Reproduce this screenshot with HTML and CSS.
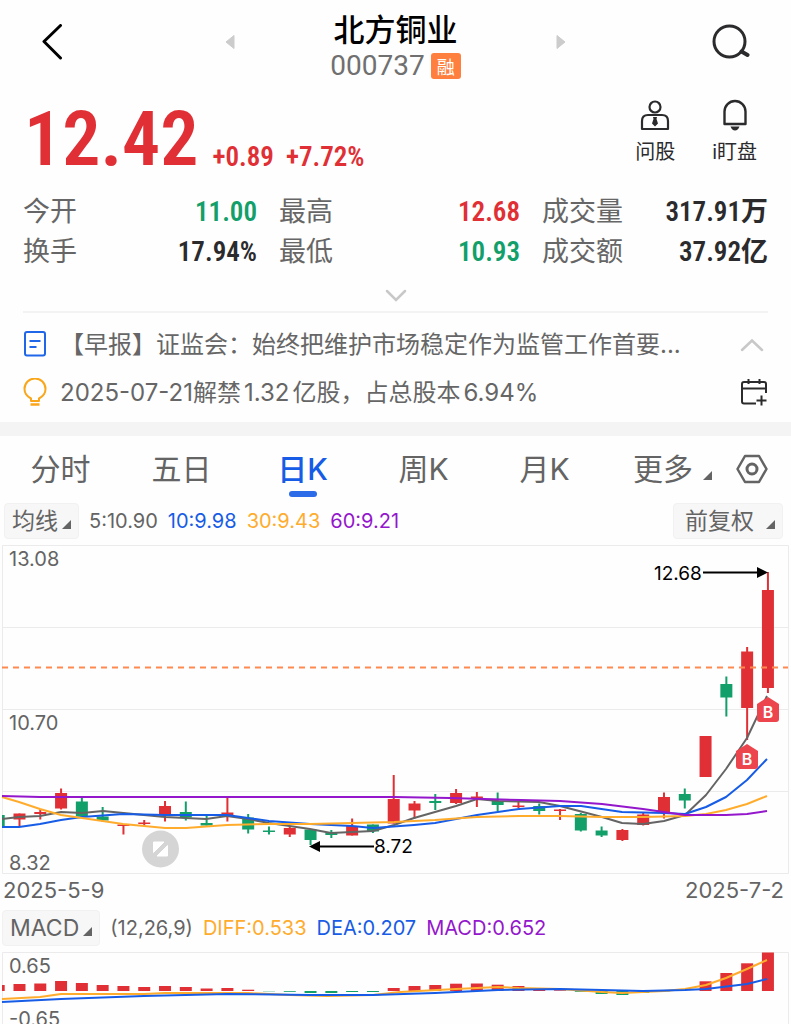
FILE: index.html
```html
<!DOCTYPE html>
<html lang="zh-CN">
<head>
  <meta charset="UTF-8" />
  <meta name="viewport" content="width=device-width, initial-scale=1.0"/>
  <title>北方铜业 000737</title>

  <link rel="stylesheet" href="styles.css">
</head>
<body>
  <header class="top-bar">
    <div class="side">
      <button type="button" aria-label="返回">
        <svg width="22" height="36" viewBox="0 0 22 36"><path d="M19.500 1.500L3 17.500L19.500 34" fill="none" stroke="#000" stroke-width="3" stroke-linecap="round" stroke-linejoin="round"/></svg>
      </button>
      <button type="button" aria-label="上一只">
        <svg width="10" height="16" viewBox="0 0 10 16"><path d="M9 1.500V14.500L1 8Z" fill="#ccc" stroke="#ccc" stroke-linejoin="round"/></svg>
      </button>
    </div>
    <div class="title">
      <h1>北方铜业</h1>
      <div class="code"><span>000737</span><span class="tag">融</span></div>
    </div>
    <div class="side">
      <button type="button" aria-label="下一只">
        <svg width="10" height="16" viewBox="0 0 10 16"><path d="M1 1.500V14.500L9 8Z" fill="#ccc" stroke="#ccc" stroke-linejoin="round"/></svg>
      </button>
      <button type="button" aria-label="搜索">
        <svg width="38" height="36" viewBox="0 0 38 36"><g fill="none" stroke="#2b2b2d" stroke-width="3"><circle cx="17.500" cy="17.500" r="15.500"/><path d="M29.500 27.500L35.500 31" stroke-width="4" stroke-linecap="round"/></g></svg>
      </button>
    </div>
  </header>

  <section class="quote">
    <div class="price">12.42</div>
    <div class="change"><span>+0.89</span><span>+7.72%</span></div>
    <div class="actions">
      <button type="button">
        <svg width="30" height="32" viewBox="0 0 30 32"><g fill="none" stroke="#2b2b2d" stroke-width="2.200"><circle cx="15" cy="8" r="5.500"/><path d="M2 30V22Q2 16 8 16H22Q28 16 28 22V30Z" stroke-linejoin="round"/></g><path d="M13 18H17L16.500 20L18 24.500L15 27.500L12 24.500L13.500 20Z" fill="#2b2b2d"/></svg>
        <span>问股</span>
      </button>
      <button type="button">
        <svg width="30" height="32" viewBox="0 0 30 32"><path d="M4.500 25V12.500A10.500 10.500 0 0 1 25.500 12.500V25Z" fill="none" stroke="#2b2b2d" stroke-width="2.400" stroke-linejoin="round"/><path d="M10.500 27.500H19.500Q18 31.500 15 31.500T10.500 27.500Z" fill="#2b2b2d"/></svg>
        <span>i盯盘</span>
      </button>
    </div>
  </section>

  <dl class="stats">
    <div><dt>今开</dt><dd class="down">11.00</dd></div>
    <div><dt>最高</dt><dd class="up">12.68</dd></div>
    <div><dt>成交量</dt><dd>317.91万</dd></div>
    <div><dt>换手</dt><dd>17.94%</dd></div>
    <div><dt>最低</dt><dd class="down">10.93</dd></div>
    <div><dt>成交额</dt><dd>37.92亿</dd></div>
  </dl>
  <button type="button" class="expand" aria-label="展开">
    <svg width="24" height="14" viewBox="0 0 24 14"><path d="M3 2L12 11L21 2" fill="none" stroke="#c8c8c8" stroke-width="2.500" stroke-linecap="round"/></svg>
  </button>

  <section class="news">
    <div class="news-row">
      <svg width="24" height="28" viewBox="0 0 24 28"><g fill="none" stroke="#1f66e8" stroke-width="2"><rect x="2" y="2" width="20" height="23.500" rx="2"/><path d="M6.500 11H17.500M6.500 17H13.500"/></g></svg>
      <a href="#">【早报】证监会：始终把维护市场稳定作为监管工作首要...</a>
      <button type="button" aria-label="收起">
        <svg width="30" height="28" viewBox="0 0 30 28"><path d="M4 20L14 10.500L24 20" fill="none" stroke="#c8c8c8" stroke-width="2.500" stroke-linecap="round"/></svg>
      </button>
    </div>
    <div class="news-row">
      <svg width="24" height="28" viewBox="0 0 24 28"><g fill="none" stroke="#faa61a" stroke-width="2"><path d="M8 23V20.500Q1.500 17 1.500 11A10.500 10.500 0 0 1 22.500 11Q22.500 17 16 20.500V23Z" stroke-linejoin="round"/><path d="M7.500 26.500H16.500" stroke-width="2.500"/></g></svg>
      <a href="#">2025-07-21解禁<span class="num">1.32</span>亿股，占总股本<span class="num">6.94%</span></a>
      <button type="button" aria-label="添加日历">
        <svg width="30" height="28" viewBox="0 0 30 28"><path d="M18 25.500H6Q4 25.500 4 23.500V6Q4 4 6 4H26Q28 4 28 6V15M4 10.500H28M10.500 1V6M21.500 1V6M23.500 17.500V27.500M18.500 22.500H28.500" fill="none" stroke="#2b2b2d" stroke-width="2"/></svg>
      </button>
    </div>
  </section>

  <nav class="tabs">
    <a href="#">分时</a>
    <a href="#">五日</a>
    <a href="#" class="active">日K</a>
    <a href="#">周K</a>
    <a href="#">月K</a>
    <div class="more">
      <button type="button" class="corner">更多</button>
      <button type="button" aria-label="设置">
        <svg width="32" height="30" viewBox="0 0 32 30"><g fill="none" stroke="#646464" stroke-width="2.500"><path d="M9 2H23L30.500 15L23 28H9L1.500 15Z" stroke-linejoin="round"/><circle cx="16" cy="15" r="5" stroke-width="3"/></g></svg>
      </button>
    </div>
  </nav>

  <div class="legend">
    <button type="button" class="chip corner">均线</button>
    <span>5:10.90</span>
    <span class="blue">10:9.98</span>
    <span class="orange">30:9.43</span>
    <span class="purple">60:9.21</span>
    <button type="button" class="chip corner right">前复权</button>
  </div>
  <svg id="kline" class="chart" viewBox="0 544 791 330" role="img" aria-label="日K线">
    <path class="grid" d="M2.500 545.500H788.500V873.500H2.500ZM2 627.500H788M2 709.500H788M2 791.500H788"/>
    <g id="candles"></g>
    <g id="averages"></g>
    <path class="last" d="M2 667.500H788"/>
    <g class="axis">
      <text x="9" y="566">13.08</text>
      <text x="9" y="730">10.70</text>
      <text x="9" y="870">8.32</text>
    </g>
    <g class="mark">
      <text x="654" y="580">12.68</text>
      <path d="M703 572.500H758" />
      <path d="M757 567L768 572.500L757 578Z"/>
      <text x="374" y="853">8.72</text>
      <path d="M374 846.500H318"/>
      <path d="M320 841L309 846.500L320 852Z"/>
    </g>
    <g class="buy">
      <path d="M747 744L758 751V766Q758 769 755 769H739Q736 769 736 766V751Z"/>
      <text x="747" y="765">B</text>
      <path d="M768 697L779 704V719Q779 722 776 722H760Q757 722 757 719V704Z"/>
      <text x="768" y="718">B</text>
    </g>
    <circle cx="160.500" cy="849" r="18.500" fill="#d5d5d5"/>
    <path d="M153.500 842H164L153.500 852.500ZM167.500 845.500V856H157Z" fill="#fff" stroke="#fff" stroke-linejoin="round"/>
  </svg>
  <div class="dates"><span>2025-5-9</span><span>2025-7-2</span></div>

  <div class="legend macd-legend">
    <button type="button" class="chip corner">MACD</button>
    <span>(12,26,9)</span>
    <span class="orange">DIFF:0.533</span>
    <span class="blue">DEA:0.207</span>
    <span class="purple">MACD:0.652</span>
  </div>
  <svg id="macd" class="chart" viewBox="0 952 791 72" role="img" aria-label="MACD">
    <path class="grid" d="M2.500 1030V952.500H788.500V1030"/>
    <g id="bars"></g>
    <g id="signals"></g>
    <g class="axis">
      <text x="9" y="973">0.65</text>
      <text x="9" y="1026">-0.65</text>
    </g>
  </svg>

  <script src="chart.js"></script>
</body>
</html>
```
FILE: styles.css
```css
* {
  box-sizing: border-box;
}

body {
  margin: 0;
  background: #fefefe;
  color: #2b2b2d;
  font-family: Inter, 'Noto Sans CJK SC', sans-serif;
}

button {
  margin: 0;
  padding: 0;
  border: 0;
  background: none;
  color: inherit;
  font: inherit;
  cursor: pointer;
}

a {
  color: inherit;
  text-decoration: none;
}

svg {
  display: block;
}

.top-bar {
  display: grid;
  grid-template-columns: 1fr auto 1fr;
  align-items: center;
  gap: 95px;
  padding: 0 41px;
  height: 84px;
}

.side {
  display: flex;
  justify-content: space-between;
  align-items: center;
}

.title {
  padding-top: 10px;
  text-align: center;
}

h1 {
  margin: 0;
  color: #000;
  font-size: 31px;
  font-weight: 500;
  line-height: 38px;
}

.code {
  display: flex;
  align-items: center;
  justify-content: center;
  gap: 6px;
  color: #707070;
  font-family: Roboto, sans-serif;
  font-size: 28px;
  line-height: 34px;
}

.tag {
  padding: 0 6px;
  border-radius: 3px;
  background: #ff7f3e;
  color: #fff;
  font-family: 'Noto Sans CJK SC', sans-serif;
  font-size: 18px;
  font-weight: 400;
  line-height: 26px;
}

.quote {
  display: flex;
  align-items: flex-end;
  padding: 0 24px;
  height: 97px;
  color: #e03035;
  font-family: 'Roboto Condensed', Roboto, sans-serif;
  font-weight: 600;
}

.price {
  font-size: 76px;
  line-height: 84px;
}

.change {
  display: flex;
  gap: 12px;
  margin-left: 14px;
  font-size: 27px;
  line-height: 48px;
}

.actions {
  display: flex;
  gap: 37px;
  margin: 0 10px 15px auto;
  color: #2b2b2d;
  font-family: Inter, 'Noto Sans CJK SC', sans-serif;
  font-size: 20px;
  font-weight: 400;
  line-height: 28px;
}

.actions button {
  display: flex;
  flex-direction: column;
  align-items: center;
  gap: 7px;
}

.stats {
  display: grid;
  grid-template-columns: 234fr 241fr 226fr;
  column-gap: 22px;
  margin: 11px 0 0;
  padding: 0 23px;
  line-height: 40px;
}

.stats div {
  display: flex;
  justify-content: space-between;
}

dt {
  color: #666;
  font-size: 27px;
}

dd {
  margin: 0;
  font-family: 'Roboto Condensed', Roboto, 'Noto Sans CJK SC', sans-serif;
  font-size: 27px;
  font-weight: 600;
}

.up {
  color: #e03035;
}

.down {
  color: #129f6a;
}

.expand {
  display: block;
  margin: 17px auto 0;
}

.news {
  margin: 8px 23px 0;
  padding-top: 7px;
  border-top: 2px solid #f3f3f3;
}

.news-row {
  display: flex;
  align-items: center;
  gap: 13px;
  height: 48px;
  color: #666;
  font-size: 24px;
}

.news-row svg {
  flex: none;
}

.news-row a {
  flex: 1;
  padding-bottom: 4px;
  overflow: hidden;
  text-overflow: ellipsis;
  white-space: nowrap;
}

.num {
  margin: 0 3px;
}

.news-row button {
  margin-left: 16px;
}

.tabs {
  display: grid;
  grid-template-columns: repeat(5, 121fr) 186fr;
  margin-top: 6px;
  border-top: 14px solid #f4f4f4;
  color: #646464;
  font-size: 30px;
  line-height: 66px;
}

.tabs > a {
  position: relative;
  text-align: center;
}

.tabs .active {
  color: #175ce6;
  font-weight: 500;
}

.active::after {
  content: '';
  position: absolute;
  left: 50%;
  bottom: 5px;
  width: 28px;
  height: 6px;
  margin-left: -14px;
  border-radius: 3px;
  background: #2c6ce8;
}

.more {
  display: flex;
  align-items: center;
  justify-content: space-between;
  padding: 0 23px 0 28px;
}

.corner {
  display: flex;
  align-items: baseline;
  gap: 10px;
}

.corner::after {
  content: '';
  border: solid transparent;
  border-width: 0 0 9px 9px;
  border-bottom-color: #646464;
}

.legend {
  display: flex;
  align-items: center;
  gap: 10px;
  margin-top: 1px;
  padding: 0 8px 0 4px;
  height: 36px;
  color: #646464;
  font-size: 20px;
}

.chip {
  gap: 4px;
  padding: 0 7px;
  border: 1px solid #f1f1f1;
  border-radius: 4px;
  background: #f7f7f7;
  font-size: 23px;
  line-height: 34px;
}

.chip.right {
  gap: 12px;
  margin-left: auto;
  padding-left: 11px;
}

.blue {
  color: #175ce6;
}

.orange {
  color: #ffac2d;
}

.purple {
  color: #9417cc;
}

.chart {
  width: 100%;
  height: auto;
}

#kline {
  margin-top: 5px;
}

.grid {
  fill: none;
  stroke: #ebebeb;
}

.last {
  stroke: #ff8a50;
  stroke-width: 2;
  stroke-dasharray: 6 5;
}

.red-fill {
  fill: #e03035;
}

.green-fill {
  fill: #129f6a;
}

.line {
  fill: none;
  stroke-width: 2;
  stroke-linejoin: round;
}

.axis {
  fill: #646464;
  font-size: 20px;
}

.mark {
  fill: #000;
  font-size: 19px;
}

.mark path {
  stroke: #000;
  stroke-width: 2;
}

.mark path[d$='Z'] {
  stroke: none;
}

.buy path {
  fill: #ec454d;
}

.buy text {
  fill: #fff;
  font-size: 16px;
  font-weight: 600;
  text-anchor: middle;
}

.dates {
  display: flex;
  justify-content: space-between;
  padding: 0 7px 0 3px;
  color: #646464;
  font-size: 22px;
  line-height: 32px;
}

.macd-legend {
  margin: 4px 0 6px;
  padding-left: 2px;
}
```
FILE: chart.js
```js
const SVG_NS = "http://www.w3.org/2000/svg";
const STEP = 20.79;
const FIRST_X = -1.3;
const BODY = 12;
const LEFT = 2;

// [up, high, open/close top, open/close bottom, low]
const candles = [
  [0, 815, 815, 827, 827], [1, 813.5, 813.5, 819.5, 826], [1, 809, 812, 814, 819.5],
  [1, 788.5, 793, 808.5, 809.5], [0, 797.5, 801.5, 816.5, 816.5], [0, 807, 816.5, 820.5, 822],
  [1, 824, 824.5, 826, 834.5], [1, 820, 822.5, 824, 826], [1, 801, 806, 815, 821.5],
  [0, 801.5, 812, 817.5, 820.5], [0, 814.5, 823, 825.5, 825.5], [1, 797.5, 812.5, 816.5, 821.5],
  [0, 814, 817.5, 829.5, 833.5], [0, 826.5, 830.5, 832, 834.5], [1, 826, 828, 834.5, 837],
  [0, 829, 829.5, 840, 845], [0, 830, 833, 835, 838], [1, 818.5, 826, 835.5, 835.5],
  [0, 824.5, 824.5, 831.5, 833], [1, 775, 799, 823.5, 823.5], [1, 801, 803.5, 810.5, 818.5],
  [0, 794, 801, 803, 810], [1, 789, 793, 803, 804], [1, 792, 796.5, 798, 807],
  [0, 792.5, 801, 805, 811], [1, 801.5, 805.5, 807, 808], [0, 803.5, 806, 811, 814.5],
  [1, 809, 809.5, 811, 820], [0, 813, 814, 830.5, 831.5], [0, 826.5, 830.5, 835.5, 837],
  [1, 829, 830, 840, 841], [1, 813, 814.5, 825, 825.5], [1, 792.5, 797, 813, 818.5],
  [0, 788.5, 794, 800.5, 808.5], [1, 736, 736, 777, 777], [0, 676.5, 684, 697.5, 716.5],
  [1, 647, 651.5, 708, 740], [1, 572, 590, 688, 693]
];

const averages = {
  "#646464": "2,819 19,817 40,816 61,812 82,813 103,811 144,815 165,817 206,819 227,816 248,819 269,823 310,829 331,833 373,831 394,825 414,818 456,806 477,799 498,801 539,802 560,806 602,817 622,823 643,824 664,821 685,815 706,795 726,769 747,738 767,696",
  "#175ce6": "2,827 19,827 40,824 61,820 82,817 123,814 165,815 206,815 227,815 248,818 269,821 310,824 352,826 373,828 414,825 435,823 477,815 519,809 560,806 581,806 622,812 664,813 685,814 706,807 726,797 747,780 767,759",
  "#ffac2d": "2,797 19,802 40,809 61,815 82,818 123,824 165,828 186,828 227,825 269,824 310,824 352,823 394,822 435,820 477,817 519,816 560,816 602,817 643,817 685,816 706,814 726,810 747,804 767,796",
  "#9417cc": "2,796 40,797 123,797 227,797 340,797 394,797 450,798 521,800 560,801 602,804 643,809 664,812 685,815 706,815 726,815 747,814 767,811"
};

// height above (+) or below (-) the zero line
const ZERO = 991;
const bars = [
  6, 7, 7.5, 10, 8, 6, 5, 4, 5, 4, 2.5, 3, 1.3, -0.3, -0.8, -2, -2, -1, -1,
  3, 5, 6, 7.3, 7.5, 6.3, 5, 1.5, 0.7, -0.8, -3, -4, -2, -0.3, 0, 9.7, 18, 27.7, 38.5
];

const signals = {
  "#ffac2d": "2,999 40,997 61,994 144,994 165,993 248,993 290,995 327,996 373,995 400,992 456,989 498,987 519,988 560,989 602,992 622,993 643,992 664,991 685,989 706,985 726,978 747,969 767,960",
  "#175ce6": "2,1002 61,999 144,996 227,994 310,995 373,995 435,993 498,990 560,989 602,990 643,991 685,990 706,989 747,984 767,979"
};

function add(parentId, tag, attrs) {
  const el = document.createElementNS(SVG_NS, tag);
  for (let key in attrs) {
    el.setAttribute(key, attrs[key]);
  }
  document.getElementById(parentId).appendChild(el);
}

function addBox(parentId, center, width, top, bottom, cls) {
  const x = Math.max(center - width / 2, LEFT);
  const right = center + width / 2;
  if (right <= x) return;
  add(parentId, "rect", { x: x, y: top, width: right - x, height: bottom - top, class: cls });
}

function addLines(parentId, lines) {
  for (let color in lines) {
    add(parentId, "polyline", { points: lines[color], stroke: color, class: "line" });
  }
}

candles.forEach(([up, high, top, bottom, low], i) => {
  const x = FIRST_X + i * STEP;
  const cls = up ? "red-fill" : "green-fill";
  addBox("candles", x, 2, high, low, cls);
  addBox("candles", x, BODY, top, bottom, cls);
});

bars.forEach((h, i) => {
  const x = FIRST_X + i * STEP;
  addBox("bars", x, BODY, ZERO - Math.max(h, 0), ZERO - Math.min(h, 0), h > 0 ? "red-fill" : "green-fill");
});

addLines("averages", averages);
addLines("signals", signals);
```
